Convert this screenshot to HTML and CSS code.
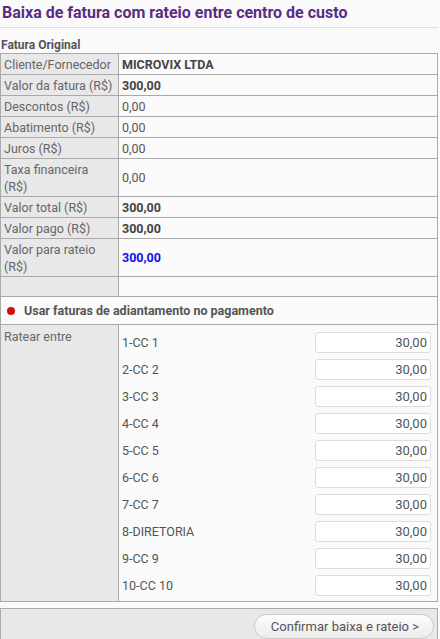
FILE: index.html
```html
<!DOCTYPE html>
<html lang="pt">
<head>
<meta charset="utf-8">
<link rel="stylesheet" href="styles.css">
</head>
<body>
<div class="page">
  <h1 class="title">Baixa de fatura com rateio entre centro de custo</h1>
  <div class="section">Fatura Original</div>
  <table class="grid">
    <tr><th>Cliente/Fornecedor</th><td class="b">MICROVIX LTDA</td></tr>
    <tr><th>Valor da fatura (R$)</th><td class="b">300,00</td></tr>
    <tr><th>Descontos (R$)</th><td>0,00</td></tr>
    <tr><th>Abatimento (R$)</th><td>0,00</td></tr>
    <tr><th>Juros (R$)</th><td>0,00</td></tr>
    <tr class="tall"><th>Taxa financeira<br>(R$)</th><td>0,00</td></tr>
    <tr><th>Valor total (R$)</th><td class="b">300,00</td></tr>
    <tr><th>Valor pago (R$)</th><td class="b">300,00</td></tr>
    <tr class="tall tall2"><th>Valor para rateio<br>(R$)</th><td class="b blue">300,00</td></tr>
    <tr class="empty"><th></th><td></td></tr>
    <tr><td colspan="2" class="adv"><span class="dot"></span>Usar faturas de adiantamento no pagamento</td></tr>
    <tr><th class="top">Ratear entre</th>
      <td class="list">
        <div class="cc"><span>1-CC 1</span><input class="val" value="30,00"></div>
        <div class="cc"><span>2-CC 2</span><input class="val" value="30,00"></div>
        <div class="cc"><span>3-CC 3</span><input class="val" value="30,00"></div>
        <div class="cc"><span>4-CC 4</span><input class="val" value="30,00"></div>
        <div class="cc"><span>5-CC 5</span><input class="val" value="30,00"></div>
        <div class="cc"><span>6-CC 6</span><input class="val" value="30,00"></div>
        <div class="cc"><span>7-CC 7</span><input class="val" value="30,00"></div>
        <div class="cc"><span>8-DIRETORIA</span><input class="val" value="30,00"></div>
        <div class="cc"><span>9-CC 9</span><input class="val" value="30,00"></div>
        <div class="cc"><span>10-CC 10</span><input class="val" value="30,00"></div>
      </td>
    </tr>
  </table>
  <div class="footer">
    <button class="btn">Confirmar baixa e rateio &gt;</button>
  </div>
</div>
</body>
</html>
```
FILE: styles.css
```css
html, body {
  margin: 0;
  padding: 0;
  background: #fafafa;
}
.page {
  width: 438px;
  font-family: Roboto, "Liberation Sans", sans-serif;
  font-size: 12.5px;
  color: #555;
}
.title {
  margin: 0;
  padding: 2px 0 4px 2px;
  font-size: 16px;
  font-weight: 700;
  color: #5b2c83;
  border-bottom: 1px solid #ddd;
  line-height: 21px;
}
.section {
  margin-top: 10px;
  padding-left: 1px;
  font-size: 12px;
  font-weight: bold;
  color: #555;
  line-height: 15px;
}
.grid {
  width: 438px;
  border-collapse: collapse;
  border: 1px solid #aaa;
}
.grid th, .grid td {
  border: 1px solid #aaa;
  padding: 0 3px;
  line-height: 17px;
  height: 20px;
  text-align: left;
  vertical-align: middle;
}
.grid th {
  width: 111px;
  background: #e8e8e8;
  font-weight: normal;
  color: #666;
}
.grid td {
  background: #fafafa;
  color: #555;
}
.grid tr.tall th {
  height: 36px;
  padding-top: 1px;
  padding-bottom: 0;
}
.grid tr.tall2 th {
  height: 36px;
}
.grid td.b {
  font-weight: bold;
  color: #444;
}
.grid td.blue {
  color: #1010f0;
}
.grid tr.empty th, .grid tr.empty td {
  height: 19px;
}
.grid td.adv {
  height: 27px;
  padding-left: 6px;
  font-weight: bold;
  color: #555;
}
.dot {
  display: inline-block;
  width: 8px;
  height: 8px;
  border-radius: 50%;
  background: #cc1111;
  margin-right: 9px;
  vertical-align: 0;
}
.grid th.top {
  vertical-align: top;
  padding-top: 3px;
}
.grid td.list {
  padding: 4px 6px 2px 3px;
}
.cc {
  display: flex;
  justify-content: space-between;
  align-items: center;
  height: 27px;
}
.val {
  width: 116px;
  height: 21px;
  box-sizing: border-box;
  border: 1px solid #ddd;
  border-radius: 3px;
  background: #fff;
  text-align: right;
  font-family: inherit;
  font-size: 13px;
  color: #555;
  padding: 0 3px;
}
.footer {
  margin-top: 6px;
  border: 1px solid #aaa;
  background: #e8e8e8;
  display: flex;
  justify-content: flex-end;
  padding: 5px 3px 6px 0;
}
.btn {
  height: 25px;
  padding: 0 14px 0 16px;
  border: 1px solid #ccc;
  border-radius: 13px;
  background: linear-gradient(#fdfdfd, #ececec);
  font-family: inherit;
  font-size: 13px;
  color: #555;
}
```
